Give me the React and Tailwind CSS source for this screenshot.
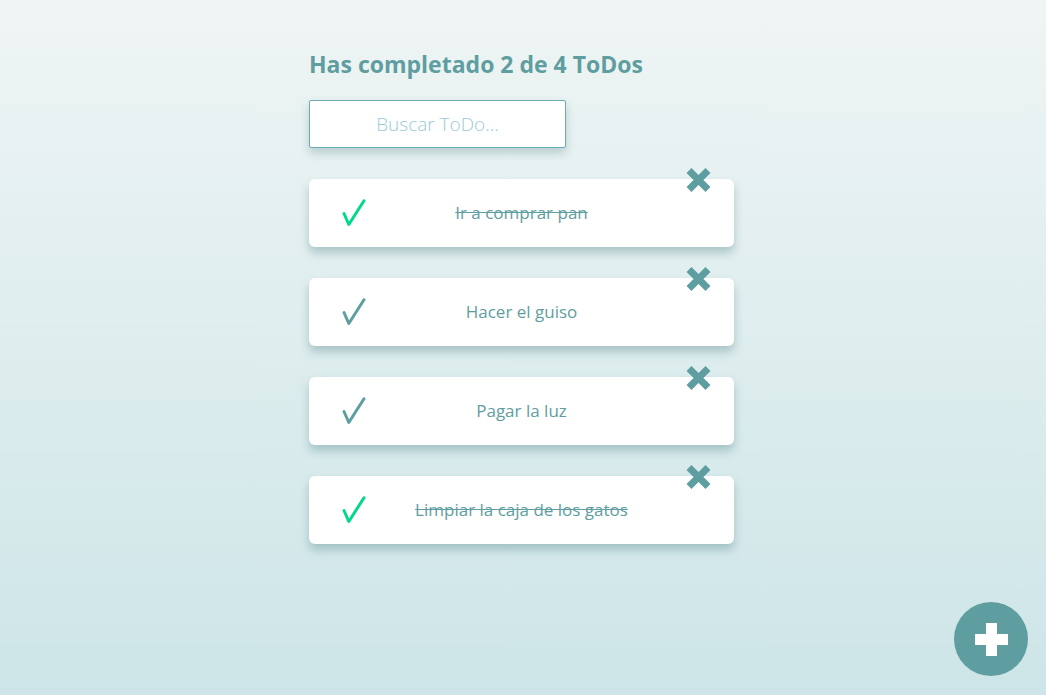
import { useState } from 'react';

const initialTodos = [
  { text: 'Ir a comprar pan', completed: true },
  { text: 'Hacer el guiso', completed: false },
  { text: 'Pagar la luz', completed: false },
  { text: 'Limpiar la caja de los gatos', completed: true },
];

const CheckIcon = ({ className }) => (
  <svg className={className} width="24" height="28" viewBox="0 0 24 28" fill="none">
    <path d="M2 14.5 L6.8 25.5 L22 1.8" stroke="currentColor" strokeWidth="3" strokeLinecap="round" strokeLinejoin="round" />
  </svg>
);

const DeleteIcon = () => (
  <svg width="27" height="26" viewBox="0 0 27 26" fill="none">
    <path d="M4 3.5 L23 22.5 M23 3.5 L4 22.5" stroke="currentColor" strokeWidth="7" />
  </svg>
);

const TodoItem = ({ text, completed }) => {
  return (
    <li className="relative flex items-center h-[68px] px-[33px] bg-white rounded-md shadow-[0_6px_10px_rgba(70,120,125,0.35)]">
      <CheckIcon className={completed ? 'shrink-0 text-[#00d98a]' : 'shrink-0 text-[#5f9ea0]'} />
      <p
        className={
          completed
            ? 'flex-1 text-center text-[17px] text-[#5f9ea0] line-through'
            : 'flex-1 text-center text-[17px] text-[#5f9ea0]'
        }
      >
        {text}
      </p>
      <span className="w-[24px] shrink-0" />
      {/* delete button sits over the top edge of the card */}
      <span className="absolute right-[22px] top-[-12px] text-[#5f9ea0]">
        <DeleteIcon />
      </span>
    </li>
  );
};

const App = () => {
  const [todos] = useState(initialTodos);
  const [search, setSearch] = useState('');
  const completedCount = todos.filter((t) => t.completed).length;

  return (
    <div
      className="min-h-screen bg-gradient-to-b from-[#eff5f4] to-[#cde5e8]"
      style={{ fontFamily: '"Open Sans", "Liberation Sans", sans-serif' }}
    >
      <div className="w-[425px] ml-[309px] pt-[49px] flex flex-col items-start">
        <h1 className="text-[23px] font-bold text-[#5f9ea0] leading-[30px]">
          Has completado {completedCount} de {todos.length} ToDos
        </h1>
        <input
          className="mt-[21px] w-[257px] h-[48px] bg-white border border-[#6aacb3] rounded-[2px] text-center text-[19px] font-light text-[#5f9ea0] placeholder:text-[#9ccad4] shadow-[0_5px_10px_rgba(70,120,125,0.3)] outline-none"
          placeholder="Buscar ToDo..."
          value={search}
          onChange={(e) => setSearch(e.target.value)}
        />
        <ul className="mt-[31px] w-full flex flex-col gap-[31px]">
          {todos.map((todo) => (
            <TodoItem key={todo.text} text={todo.text} completed={todo.completed} />
          ))}
        </ul>
      </div>
      <button className="fixed right-[18px] bottom-[19px] w-[74px] h-[74px] rounded-full bg-[#5f9ea0] flex items-center justify-center">
        <svg width="33" height="33" viewBox="0 0 33 33">
          <path d="M11 0 H22 V11 H33 V22 H22 V33 H11 V22 H0 V11 H11 Z" fill="white" />
        </svg>
      </button>
    </div>
  );
};

export default App;
